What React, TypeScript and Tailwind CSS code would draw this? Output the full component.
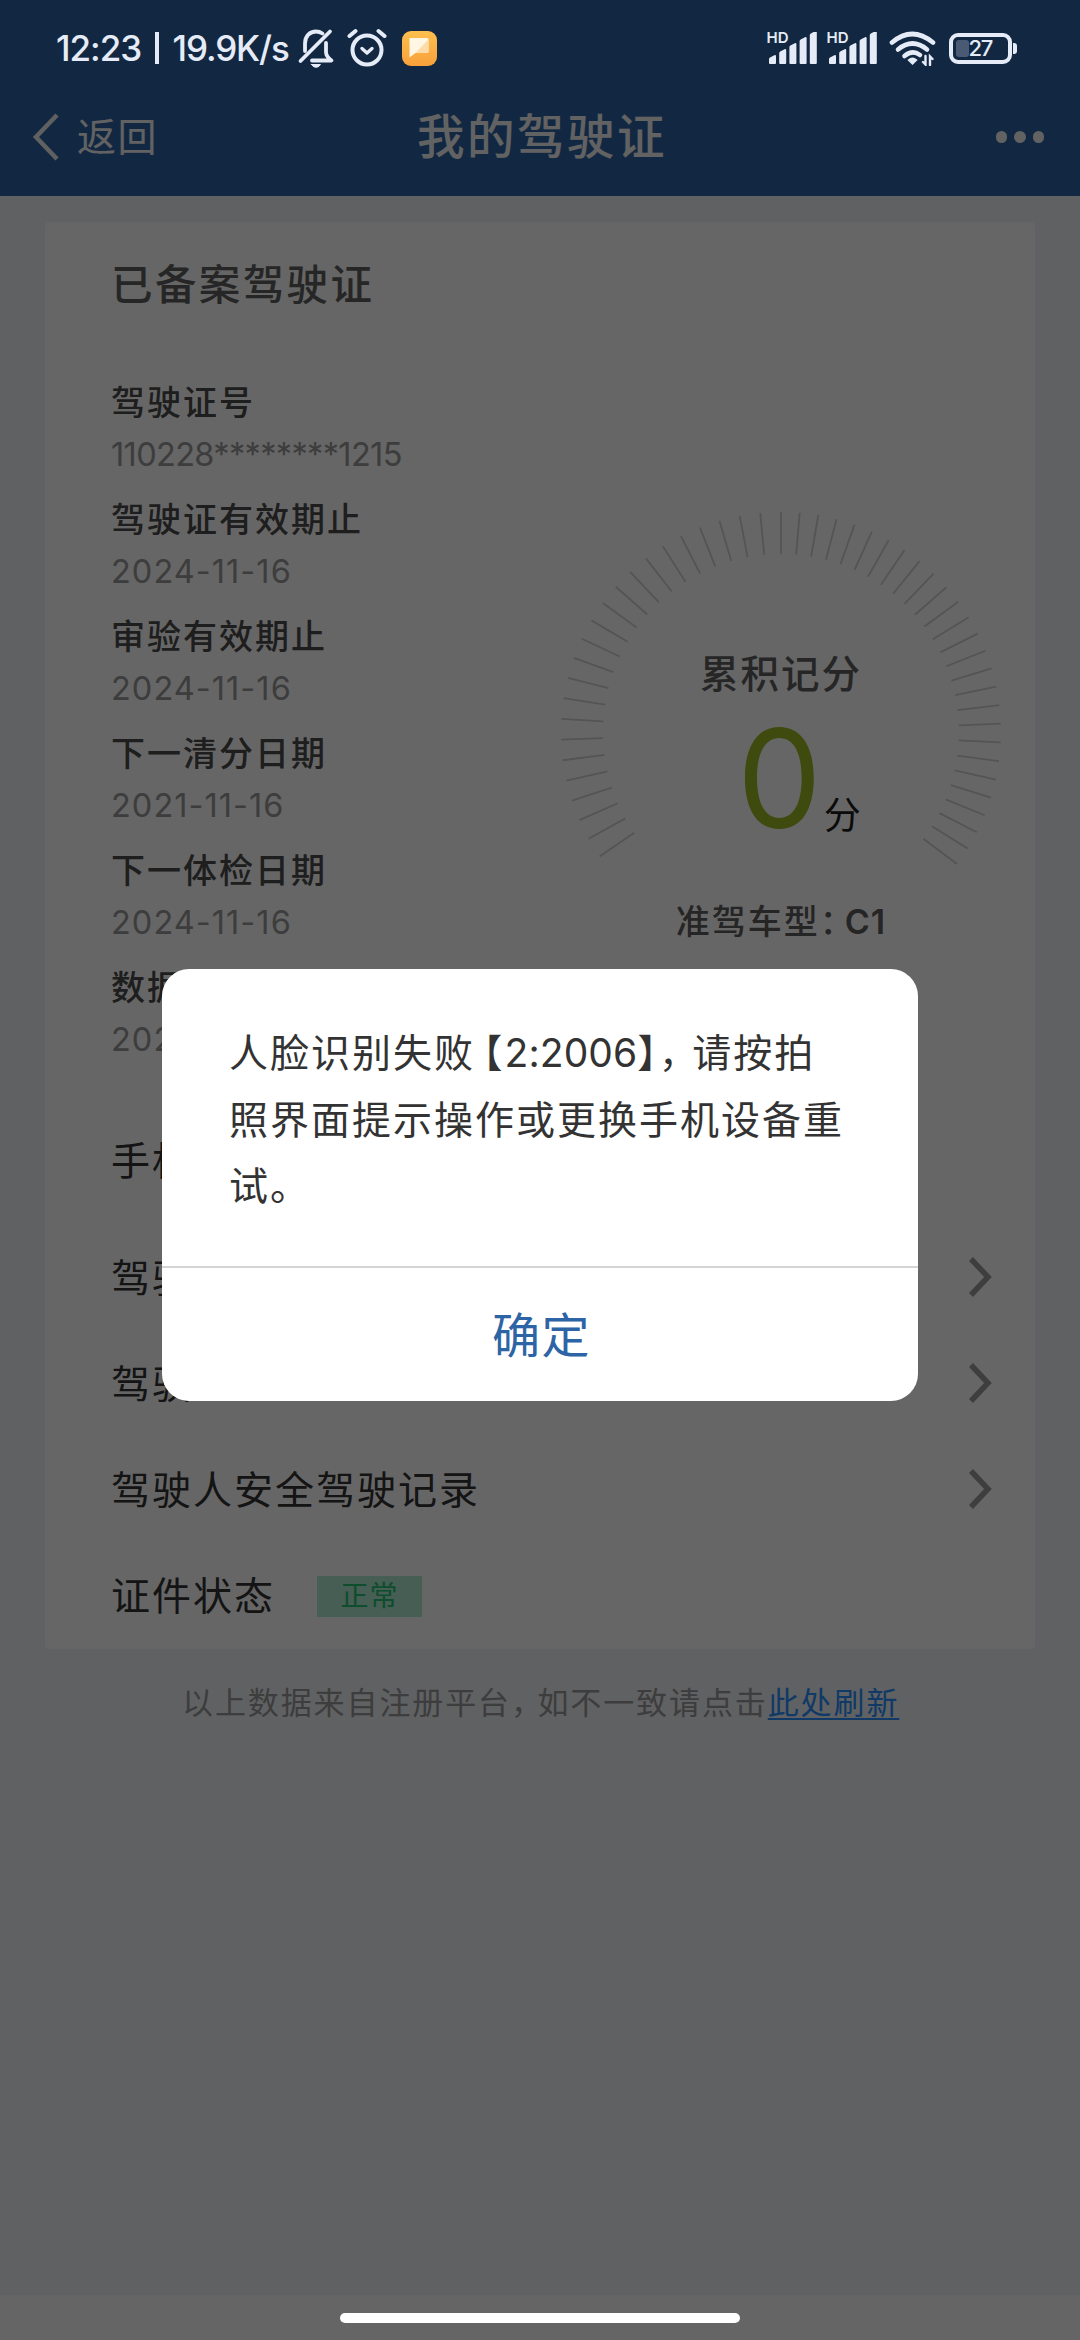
import type { ReactNode } from 'react';

const records = [
  ['驾驶证号', '110228********1215'],
  ['驾驶证有效期止', '2024-11-16'],
  ['审验有效期止', '2024-11-16'],
  ['下一清分日期', '2021-11-16'],
  ['下一体检日期', '2024-11-16'],
  ['数据更新日期', '2021-11-16'],
];

function SignalBars() {
  const tops = [24, 18, 12, 6, 0];
  return (
    <div className="relative h-[32px] w-[50px]">
      <span className="absolute -top-[1px] left-0 text-[15px] leading-[13px] font-semibold">HD</span>
      <svg className="absolute inset-0" width="50" height="32" viewBox="0 0 50 32" fill="#e6ecf7">
        {tops.map((t, i) => (
          <path key={t} d={`M${2 + i * 10.2} 31V${t + 3}q0-1 1-1.6l4.4-2.2q1.6-.6 1.6 1V31q0 1-1 1h-5q-1 0-1-1z`} />
        ))}
      </svg>
    </div>
  );
}

function StatusBar() {
  return (
    <div className="relative z-20 flex h-[78px] items-center pt-[18px] pr-[63px] pl-[56px] text-[#e6ecf7]">
      <div className="flex items-center text-[35px] font-medium">
        <span className="w-[99px] tracking-[-1px]">12:23</span>
        <span className="mr-[14px] h-[32px] w-[3.5px] bg-[#e6ecf7]" />
        <span className="w-[124px] tracking-[-1.1px]">19.9K/s</span>
      </div>
      <svg className="mt-[-1px]" width="38" height="40" viewBox="0 0 38 40" fill="none" stroke="#e6ecf7" strokeWidth="3.800" strokeLinecap="round" strokeLinejoin="round">
        <path d="M3.500 33L33 3.500" />
        <path d="M8 23V15.500C8 8 13 3.500 19 3.500q3.500 0 6.500 2" />
        <path d="M29 15v9q0 4.500 5.500 8.500H15" />
        <path d="M14.500 36.500h9q-1.500 2.800-4.500 2.800t-4.500-2.800z" fill="#e6ecf7" strokeWidth="1" />
      </svg>
      <svg className="mt-[-1px] ml-[12px]" width="40" height="40" viewBox="0 0 40 40" fill="none" stroke="#e6ecf7" strokeWidth="4" strokeLinecap="round" strokeLinejoin="round">
        <circle cx="20" cy="22" r="14.500" />
        <path d="M2.500 8l6-5M37.500 8l-6-5" />
        <path d="M15 20.500l5 4.500 5-4.500" strokeWidth="3.400" />
      </svg>
      <div className="ml-[15px] flex size-[35px] items-center justify-center rounded-[9px] bg-linear-to-b from-[#fcc04e] to-[#f9a03b]">
        <svg width="20" height="20" viewBox="0 0 20 20">
          <path d="M1 0h17q1.500 0 1.500 1.500v12q0 1.500-1.500 1.500H6.500l-6 4.500V1Q0 0 1 0z" fill="#fff6e4" />
          <path d="M19.500 1.500v12q0 1.500-1.500 1.500H6.500z" fill="#fddca8" />
        </svg>
      </div>
      <div className="ml-auto flex items-center">
        <SignalBars />
        <div className="ml-[10px]"><SignalBars /></div>
        <svg className="ml-[12px]" width="48" height="36" viewBox="0 0 48 36" fill="none" stroke="#e6ecf7" strokeWidth="4.600" strokeLinecap="round">
          <path d="M3 12.500q20-17 41 0" />
          <path d="M9 19.500q14.500-12 29 0" />
          <path d="M15.500 26q8-6.500 15.500-1" />
          <path d="M19.500 30q4-3.500 8 0l-4 4z" fill="#e6ecf7" strokeWidth="1.500" />
          <path d="M36.500 26v8.500l-2.500-2.500M41 35v-8.500l2.500 2.500" strokeWidth="2.400" />
        </svg>
        <div className="ml-[12px] flex h-[31px] w-[63px] items-center rounded-[9px] border-[4px] border-[#e6ecf7] pl-[3px]">
          <span className="h-[17px] w-[13px] rounded-[3px] bg-[#4b5a74]" />
          <span className="text-[22px] leading-none font-medium tracking-[-1.200px]">27</span>
        </div>
        <span className="ml-[1.500px] h-[11px] w-[4px] rounded-r-[3px] bg-[#e6ecf7]" />
      </div>
    </div>
  );
}

function Gauge() {
  const angles = Array.from({ length: 50 }, (_, i) => (i < 24 ? (i - 23) * 5.41 : (i - 23) * 4.88));
  return (
    <svg className="absolute inset-0" width="450" height="450" viewBox="-225 -225 450 450" stroke="#d2d2d2" strokeWidth="1.800">
      {angles.map((a) => (
        <line key={a} x1="0" y1="-220" x2="0" y2="-178" transform={`rotate(${a})`} />
      ))}
    </svg>
  );
}

function Row({ children, arrow }: { children: ReactNode; arrow?: boolean }) {
  return (
    <div className="flex h-[106px] items-center text-[39px] tracking-[2px] text-[#333]">
      {children}
      {arrow && (
        <svg className="mt-[-3px] mr-[43px] ml-auto" width="24" height="42" viewBox="0 0 24 42" fill="none" stroke="#9c9c9c" strokeWidth="5.500">
          <path d="M3 3l17 18L3 39" />
        </svg>
      )}
    </div>
  );
}

/* Full-width punctuation set on a half-width advance. */
function Half({ children, className = '' }: { children: string; className?: string }) {
  return <span className={`[font-feature-settings:'halt'] [text-spacing-trim:space-all] ${className}`}>{children}</span>;
}

export default function App() {
  return (
    <div className="relative flex h-[2340px] w-[1080px] flex-col overflow-hidden bg-[#f0f2f7] font-['Inter','Noto_Sans_CJK_SC',sans-serif] [text-spacing-trim:space-all]">
      <header className="h-[196px] bg-[#2d64a5]">
        <StatusBar />
        <div className="grid h-[118px] grid-cols-3 items-center text-[#f4f4f4]">
          <div className="flex items-center pl-[32px]">
            <svg width="28" height="48" viewBox="0 0 28 48" fill="none" stroke="#f0f0f0" strokeWidth="4.500">
              <path d="M25 2L4 24l21 22" />
            </svg>
            <span className="ml-[17px] text-[39px] tracking-[1.500px]">返回</span>
          </div>
          <h1 className="pl-[4px] text-center text-[47.500px] font-medium tracking-[2.500px] whitespace-nowrap">我的驾驶证</h1>
          <div className="flex justify-end gap-[7px] pr-[36px]">
            <span className="size-[11.500px] rounded-full bg-[#f4f4f4]" />
            <span className="size-[11.500px] rounded-full bg-[#f4f4f4]" />
            <span className="size-[11.500px] rounded-full bg-[#f4f4f4]" />
          </div>
        </div>
      </header>

      <main className="mx-[45px] mt-[26px] h-[1427px] rounded-[4px] bg-white pl-[66px]">
        <h2 className="pt-[37px] text-[41.500px] leading-[52px] font-medium tracking-[2.400px] text-[#606060]">已备案驾驶证</h2>
        <div className="mt-[66px] flex h-[731px]">
          <dl className="w-[440px]">
            {records.map(([label, value]) => (
              <div key={label} className="mb-[13px]">
                <dt className="text-[34px] leading-[52px] font-medium tracking-[2px] text-[#4c4c4c]">{label}</dt>
                <dd className={`text-[32.500px] leading-[52px] text-[#999] ${value.length > 10 ? 'tracking-[-0.650px]' : 'tracking-[1.050px]'}`}>{value}</dd>
              </div>
            ))}
          </dl>
          <section className="relative mt-[130px] ml-[5px] h-[450px] w-[450px]">
            <Gauge />
            <div className="relative flex flex-col items-center">
              <p className="mt-[142px] text-[38.500px] leading-[50px] font-medium tracking-[2px] text-[#606060]">累积记分</p>
              <div className="mt-[10px] flex h-[138px] items-center pl-[36px]">
                <span className="origin-left scale-x-[.980] text-[137px] leading-[138px] text-[#9cb825]">0</span>
                <span className="pt-[74px] text-[37px] leading-none text-[#1c1c1c]">分</span>
              </div>
              <p className="mt-[50px] text-[34px] leading-[50px] font-medium tracking-[2px] whitespace-nowrap text-[#5c5c5c]">
                准驾车型<Half className="mr-[6px]">：</Half><span className="font-semibold tracking-[1px]">C1</span>
              </p>
            </div>
          </section>
        </div>
        <div className="flex h-[117px] items-center pb-[11px] text-[39px] tracking-[2px] text-[#333]">手机号码</div>
        <Row arrow>驾驶证电子版</Row>
        <Row arrow>驾驶证</Row>
        <Row arrow>驾驶人安全驾驶记录</Row>
        <Row>
          证件状态
          <span className="ml-[42px] flex h-[41px] w-[105px] items-center justify-center bg-[#b0ecd0] text-[28px] tracking-[1px] text-[#25c072]">正常</span>
        </Row>
      </main>

      <p className="mt-[29px] pl-[182px] text-[31px] leading-[50px] tracking-[1.900px] whitespace-nowrap text-[#999]">
        以上数据来自注册平台<Half className="mr-[9px]">，</Half>如不一致请点击
        <a className="text-[#2a90ff] underline decoration-2 underline-offset-[4px]">此处刷新</a>
      </p>

      <div className="mt-auto flex h-[45px] justify-center bg-[#fcfdff] pt-[18px]">
        <span className="relative z-20 h-[10px] w-[400px] rounded-full bg-white" />
      </div>

      <div className="absolute inset-0 z-10 bg-black/60 pt-[969px]">
        <div role="alertdialog" className="mx-auto flex h-[432px] w-[756px] flex-col rounded-[27px] bg-white">
          <p className="h-[297px] pt-[51px] pl-[67px] text-[39px] leading-[66.500px] tracking-[2px] text-[#333]">
            人脸识别失败<Half className="ml-[8px]">【</Half><span className="tracking-[0.100px]">2:2006</span>
            <Half>】</Half><Half className="mr-[12px]">，</Half>请按拍
            <br />
            照界面提示操作或更换手机设备重
            <br />
            试。
          </p>
          <button className="flex-1 border-t-2 border-[#d4d6d6] pt-[3px] pl-[3px] text-[48px] tracking-[1.500px] text-[#2d64a5]">确定</button>
        </div>
      </div>
    </div>
  );
}
